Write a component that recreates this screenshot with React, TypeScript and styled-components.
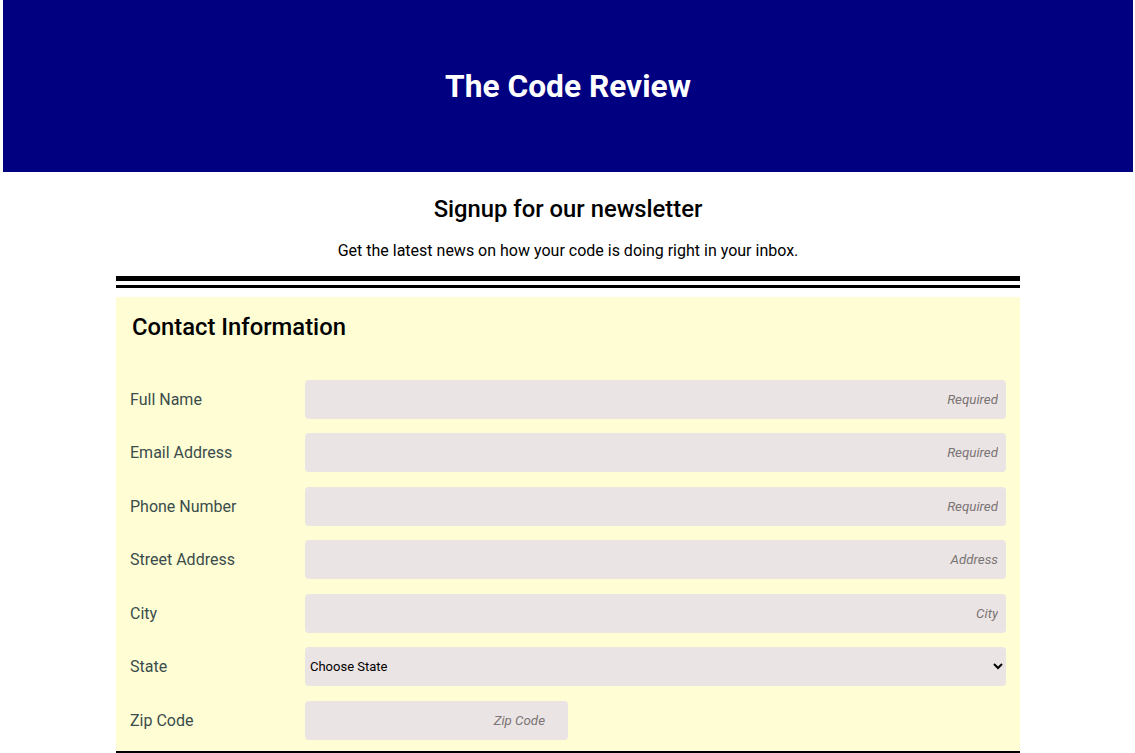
import React from "react";
import styled, { createGlobalStyle } from "styled-components";

const Global = createGlobalStyle`
  html, body { margin: 0; padding: 0; background: #ffffff; }
  body { font-family: Roboto, "Liberation Sans", Arial, sans-serif; }
  #root { padding: 0 2px 0 3px; }
  * { box-sizing: border-box; }
`;

const Header = styled.header`
  background: #000080;
  height: 172px;
  display: flex;
  align-items: center;
  justify-content: center;
`;

const Title = styled.h1`
  margin: 2px 0 0;
  color: #ffffff;
  font-size: 31.7px;
  font-weight: 700;
  line-height: 38px;
`;

const Main = styled.main`
  width: 80%;
  margin: 0 auto;
  text-align: center;
`;

const Subtitle = styled.h2`
  margin: 22.5px 0 0;
  font-size: 23.8px;
  font-weight: 500;
  line-height: 28px;
  color: #000;
`;

const Lead = styled.p`
  margin: 18px 0 0;
  font-size: 16px;
  line-height: 19px;
  color: #000;
`;

const Divider = styled.div`
  margin-top: 16px;
  height: 12px;
  border-top: 5px solid #000;
  border-bottom: 3px solid #000;
`;

const Panel = styled.section`
  margin-top: 9px;
  background: #fffdd3;
  border-bottom: 3px solid #000;
  padding: 16px 14px 11px 14px;
  text-align: left;
`;

const PanelTitle = styled.h3`
  margin: 0 0 39px 2px;
  font-size: 23.8px;
  font-weight: 500;
  line-height: 28px;
  color: #000;
`;

const Rows = styled.div`
  display: flex;
  flex-direction: column;
  gap: 14.5px;
`;

const Row = styled.div`
  display: flex;
  align-items: center;
  height: 39px;
`;

const Label = styled.label`
  width: 175px;
  flex: none;
  font-size: 16px;
  color: #3a4c4c;
`;

const Input = styled.input<{ $width?: number; $padRight?: number }>`
  height: 39px;
  border: none;
  border-radius: 4px;
  background: #ebe4e4;
  font-family: Roboto, "Liberation Sans", Arial, sans-serif;
  font-size: 13.33px;
  text-align: right;
  padding: 0 ${(p) => p.$padRight ?? 8}px 0 8px;
  outline: none;
  ${(p) => (p.$width ? `width: ${p.$width}px; flex: none;` : "flex: 1;")}
  &::placeholder {
    color: #7a7474;
    font-style: italic;
  }
`;

const Select = styled.select`
  flex: 1;
  height: 39px;
  border: none;
  border-radius: 4px;
  background: #ebe4e4;
  font-family: Roboto, "Liberation Sans", Arial, sans-serif;
  font-size: 13px;
  color: #000;
  padding: 0 4px 0 1px;
  outline: none;
`;

const fields = [
  { label: "Full Name", placeholder: "Required" },
  { label: "Email Address", placeholder: "Required" },
  { label: "Phone Number", placeholder: "Required" },
  { label: "Street Address", placeholder: "Address" },
  { label: "City", placeholder: "City" },
];

export default function App() {
  return (
    <>
      <Global />
      <Header>
        <Title>The Code Review</Title>
      </Header>
      <Main>
        <Subtitle>Signup for our newsletter</Subtitle>
        <Lead>Get the latest news on how your code is doing right in your inbox.</Lead>
        <Divider />
        <Panel>
          <PanelTitle>Contact Information</PanelTitle>
          <Rows>
            {fields.map((f) => (
              <Row key={f.label}>
                <Label>{f.label}</Label>
                <Input placeholder={f.placeholder} />
              </Row>
            ))}
            <Row>
              <Label>State</Label>
              <Select defaultValue="">
                <option value="">Choose State</option>
              </Select>
            </Row>
            <Row>
              <Label>Zip Code</Label>
              <Input placeholder="Zip Code" $width={263} $padRight={23} />
            </Row>
          </Rows>
        </Panel>
      </Main>
    </>
  );
}
